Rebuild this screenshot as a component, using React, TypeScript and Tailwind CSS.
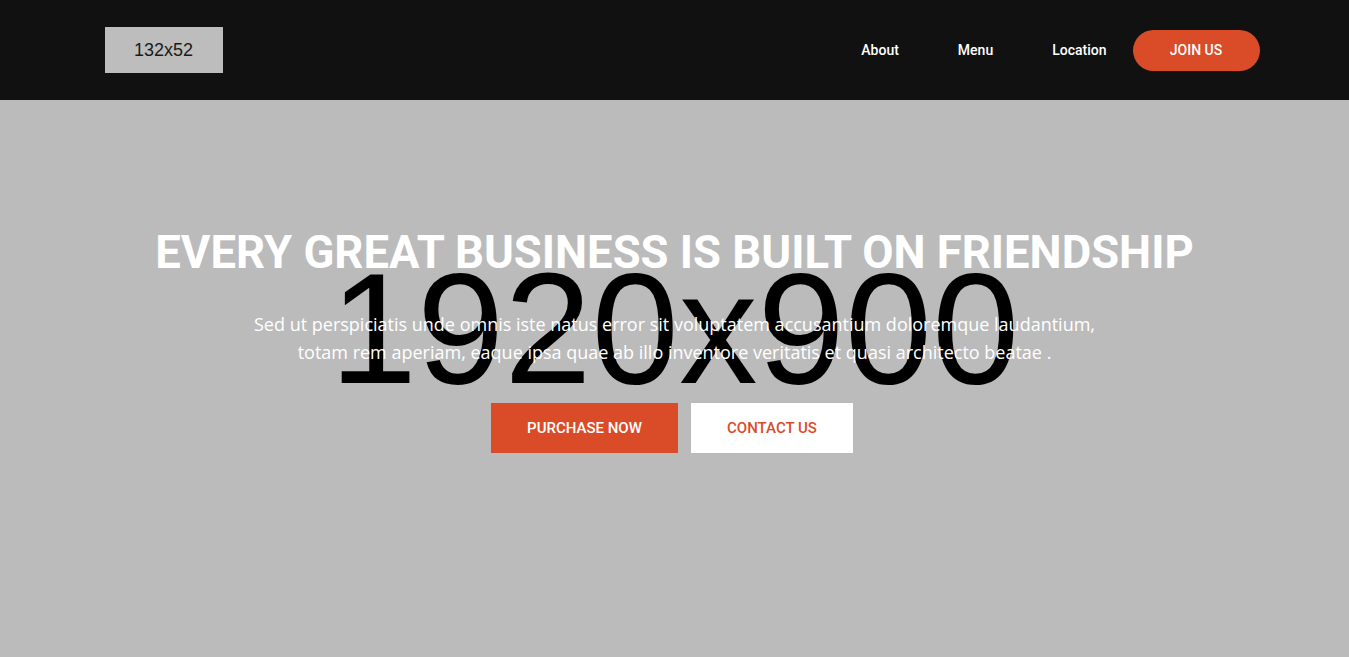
export default function App() {
  const links = ['About', 'Menu', 'Location'];

  return (
    <div className="min-h-screen bg-[#bbbbbb]" style={{ fontFamily: 'Roboto, sans-serif' }}>
      {/* Header */}
      <header className="h-[100px] bg-[#111111]">
        <div className="mx-auto flex h-full w-[1170px] items-center justify-between pl-[15px]">
          <div className="flex h-[46px] w-[118px] items-center justify-center bg-[#bdbdbd] text-[18px] text-[#1a1a1a] font-['Liberation_Sans',Arial,sans-serif]">
            132x52
          </div>
          <nav className="flex items-center">
            <ul className="flex items-center gap-[59px]">
              {links.map((l) => (
                <li key={l}>
                  <a href="#" className="text-[14px] font-medium text-white">
                    {l}
                  </a>
                </li>
              ))}
            </ul>
            <button className="ml-[26px] h-[41px] w-[127px] rounded-full bg-[#da4c28] text-[14px] font-medium text-white">
              JOIN US
            </button>
          </nav>
        </div>
      </header>

      {/* Hero */}
      <section className="relative h-[557px] overflow-hidden bg-[#bbbbbb]">
        {/* placeholder image label */}
        <div className="absolute inset-x-0 top-[150px] text-center text-[157px] leading-[157px] text-black font-['Liberation_Sans',Arial,sans-serif]">
          1920x900
        </div>

        <div className="relative flex flex-col items-center pt-[127px] text-center">
          <h1 className="text-[45.4px] font-bold leading-[52px] text-white">
            EVERY GREAT BUSINESS IS BUILT ON FRIENDSHIP
          </h1>
          <p className="mt-[31px] max-w-[860px] text-[18px] leading-[28px] text-white font-['Open_Sans',sans-serif]">
            Sed ut perspiciatis unde omnis iste natus error sit voluptatem accusantium doloremque laudantium, totam rem aperiam, eaque ipsa quae ab illo inventore veritatis et quasi architecto beatae .
          </p>
          <div className="mt-[37px] mr-[5px] flex gap-[13px]">
            <button className="h-[50px] w-[187px] bg-[#da4c28] text-[15px] font-medium text-white">
              PURCHASE NOW
            </button>
            <button className="h-[50px] w-[162px] bg-white text-[15px] font-medium text-[#da4c28]">
              CONTACT US
            </button>
          </div>
        </div>
      </section>
    </div>
  );
}
